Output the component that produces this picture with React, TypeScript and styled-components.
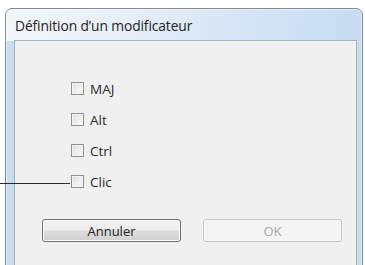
import React from "react";
import styled, { createGlobalStyle } from "styled-components";

const Global = createGlobalStyle`
  html, body { margin: 0; padding: 0; background: #ffffff; }
  body { font-family: "Open Sans", "Noto Sans", sans-serif; overflow: hidden; }
`;

const Page = styled.div`
  position: relative;
  width: 365px;
  height: 265px;
  overflow: hidden;
  padding: 8px 2px 0 5px;
  box-sizing: border-box;
`;

const Window = styled.div`
  height: 262px;
  border: 1px solid #7f8a96;
  border-radius: 7px 7px 0 0;
  background-color: #c9ddf2;
  background-image: linear-gradient(100deg, #f4f7fa 0%, #e6eef7 35%, #d3e4f5 70%, #c6dcf2 100%);
  background-size: 100% 32px;
  background-repeat: no-repeat;
  padding: 0 5px 0 8px;
  box-sizing: border-box;
  display: flex;
  flex-direction: column;
  box-shadow: inset 0 0 0 1px rgba(255,255,255,0.55);
`;

const TitleBar = styled.div`
  height: 31px;
  display: flex;
  align-items: center;
  padding-left: 1px;
  padding-top: 1px;
  box-sizing: border-box;
  font-size: 13.8px;
  color: #222222;
  letter-spacing: -0.1px;
`;

const Client = styled.div`
  flex: 1;
  background: #f0f0f0;
  border: 1px solid #a7b1bb;
  border-bottom: none;
  display: flex;
  flex-direction: column;
  padding: 41px 0 0 56px;
  box-sizing: border-box;
`;

const Options = styled.div`
  display: flex;
  flex-direction: column;
  gap: 18px;
`;

const Row = styled.label`
  display: flex;
  align-items: center;
  height: 13px;
  gap: 6px;
  font-size: 13.5px;
  color: #2a2a2a;
`;

const Box = styled.span`
  width: 11px;
  height: 11px;
  border: 1px solid #8f9192;
  background: linear-gradient(135deg, #dcdcdc 0%, #eeeeee 50%, #fafafa 100%);
  box-shadow: inset 0 0 0 1px #f4f4f4;
  flex: none;
`;

const Buttons = styled.div`
  display: flex;
  gap: 22px;
  margin: 31px 0 0 -29px;
`;

const Button = styled.div<{ $disabled?: boolean }>`
  width: 139px;
  height: 23px;
  box-sizing: border-box;
  border-radius: 3px;
  display: flex;
  align-items: center;
  justify-content: center;
  font-size: 13px;
  border: 1px solid ${(p) => (p.$disabled ? "#c3c6c9" : "#707070")};
  color: ${(p) => (p.$disabled ? "#a6a6a6" : "#222222")};
  background: ${(p) =>
    p.$disabled
      ? "#f4f4f4"
      : "linear-gradient(180deg, #f3f3f3 0%, #ebebeb 48%, #dddddd 52%, #cfcfcf 100%)"};
  box-shadow: inset 0 0 0 1px ${(p) => (p.$disabled ? "#f8f8f8" : "#fbfbfb")};
`;

const Callout = styled.div`
  position: absolute;
  left: 0;
  top: 183px;
  width: 70px;
  height: 1px;
  background: #2a2a2a;
`;

const options = ["MAJ", "Alt", "Ctrl", "Clic"];

export default function App() {
  return (
    <>
      <Global />
      <Page>
        <Window>
          <TitleBar>Définition d’un modificateur</TitleBar>
          <Client>
            <Options>
              {options.map((o) => (
                <Row key={o}>
                  <Box />
                  {o}
                </Row>
              ))}
            </Options>
            <Buttons>
              <Button>Annuler</Button>
              <Button $disabled>OK</Button>
            </Buttons>
          </Client>
        </Window>
        <Callout />
      </Page>
    </>
  );
}
